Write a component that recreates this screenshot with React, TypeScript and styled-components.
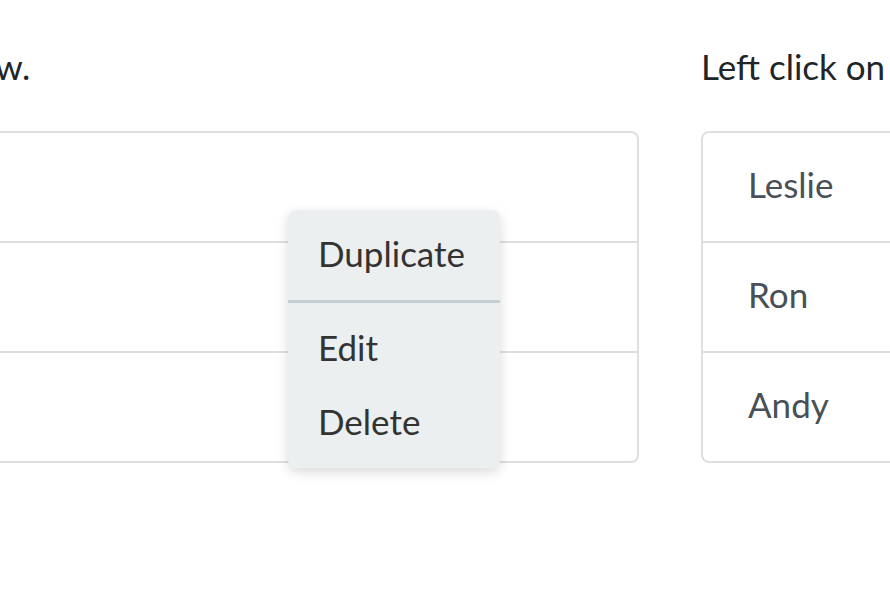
import React from "react";
import styled, { createGlobalStyle } from "styled-components";

const GlobalStyle = createGlobalStyle`
  html {
    overflow: hidden;
  }
  body {
    margin: 0;
    padding: 0;
    background: #fff;
    font-family: "Lato", "Open Sans", sans-serif;
  }
`;

const leftNames = ["April", "Tom", "Donna"];
const rightNames = ["Leslie", "Ron", "Andy"];

const App: React.FC = () => {
  return (
    <>
      <GlobalStyle />
      <Viewport>
        <Page>
          <Column $width={1300}>
            <Heading>Right click on a row to open the menu below.</Heading>
            <ListWrap>
              <List>
                {leftNames.map((name) => (
                  <Row key={name}>{name}</Row>
                ))}
              </List>
              <Menu>
                <MenuItem>Duplicate</MenuItem>
                <Divider />
                <MenuItem>Edit</MenuItem>
                <MenuItem>Delete</MenuItem>
              </Menu>
            </ListWrap>
          </Column>
          <Column $width={700}>
            <Heading>Left click on a row to open the menu.</Heading>
            <List>
              {rightNames.map((name) => (
                <Row key={name}>{name}</Row>
              ))}
            </List>
          </Column>
        </Page>
      </Viewport>
    </>
  );
};

export default App;

const Viewport = styled.div`
  width: 890px;
  height: 616px;
  overflow: hidden;
`;

const Page = styled.div`
  display: flex;
  gap: 62px;
  margin-left: -661px;
  padding-top: 44px;
  width: 2200px;
`;

const Column = styled.div<{ $width: number }>`
  flex: 0 0 ${(p) => p.$width}px;
  display: flex;
  flex-direction: column;
`;

const Heading = styled.h2`
  margin: 0 0 42px;
  font-size: 35px;
  font-weight: 400;
  line-height: 45px;
  color: #212529;
  white-space: nowrap;
`;

const ListWrap = styled.div`
  position: relative;
`;

const List = styled.ul`
  list-style: none;
  margin: 0;
  padding: 0;
  border: 2px solid #dfdfdf;
  border-radius: 8px;
`;

const Row = styled.li`
  height: 108px;
  box-sizing: border-box;
  display: flex;
  align-items: center;
  padding: 0 0 6px 45px;
  font-size: 35px;
  color: #495057;
  & + & {
    border-top: 2px solid #dfdfdf;
    height: 110px;
  }
`;

const Menu = styled.div`
  position: absolute;
  top: 79px;
  right: 139px;
  width: 212px;
  padding: 6px 0 10px;
  background: #eceff0;
  border-radius: 8px;
  box-shadow: 0 4px 12px rgba(0, 0, 0, 0.15);
  z-index: 2;
`;

const MenuItem = styled.div`
  height: 74px;
  display: flex;
  align-items: center;
  padding-left: 30px;
  font-size: 35px;
  color: #333;
`;

const Divider = styled.div`
  height: 3px;
  margin: 10px 0 7px;
  background: #c5d0d5;
`;
